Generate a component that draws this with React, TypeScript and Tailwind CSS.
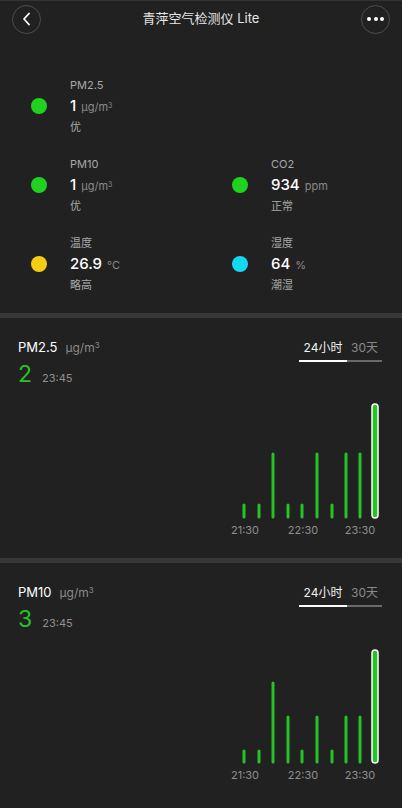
import React from "react";

const font = { fontFamily: 'Inter, "Noto Sans CJK SC", sans-serif' };

type Metric = { label: string; value: string; unit: React.ReactNode; status: string; dot: string };

const metrics: (Metric | null)[] = [
  { label: "PM2.5", value: "1", unit: <>μg/m<sup className="text-[7px]">3</sup></>, status: "优", dot: "bg-[#1fd21f]" },
  null,
  { label: "PM10", value: "1", unit: <>μg/m<sup className="text-[7px]">3</sup></>, status: "优", dot: "bg-[#1fd21f]" },
  { label: "CO2", value: "934", unit: "ppm", status: "正常", dot: "bg-[#1fd21f]" },
  { label: "温度", value: "26.9", unit: "°C", status: "略高", dot: "bg-[#f7cc14]" },
  { label: "湿度", value: "64", unit: "%", status: "潮湿", dot: "bg-[#14d8f2]" },
];

function MetricItem({ m }: { m: Metric }) {
  return (
    <div className="flex items-center h-[62px]">
      <div className={`w-4 h-4 rounded-full ${m.dot}`}></div>
      <div className="ml-[23px] flex flex-col">
        <div className="text-[11px] leading-[20px] text-[#a8a8a8]">{m.label}</div>
        <div className="flex items-baseline h-[22px] leading-[22px]">
          <span className="text-[15px] font-medium text-white">{m.value}</span>
          <span className="ml-[5px] text-[11px] text-[#8a8a8a]">{m.unit}</span>
        </div>
        <div className="text-[11px] leading-[20px] text-[#a8a8a8]">{m.status}</div>
      </div>
    </div>
  );
}

const xs = [244, 259, 273, 288, 302, 317, 332, 346, 360];

function Chart({ heights, last }: { heights: number[]; last: number }) {
  const base = 122;
  return (
    <svg width="402" height="150" className="block">
      {heights.map((h, i) => (
        <line
          key={i}
          x1={xs[i]}
          x2={xs[i]}
          y1={base}
          y2={base - h}
          stroke="#26c226"
          strokeWidth="3"
          strokeLinecap="round"
        />
      ))}
      <rect x={372} y={base - last} width={6} height={last + 1} rx={3} fill="#26c226" stroke="#ffffff" strokeWidth="1.5" />
      {[
        [245, "21:30"],
        [303, "22:30"],
        [360, "23:30"],
      ].map(([x, t]) => (
        <text key={t} x={x} y={139} textAnchor="middle" fontSize="11" fill="#8f8f8f" style={font}>
          {t}
        </text>
      ))}
    </svg>
  );
}

function ChartSection({ title, value, heights, last }: { title: string; value: string; heights: number[]; last: number }) {
  return (
    <div className="h-[240px] bg-[#212121] flex flex-col">
      <div className="flex justify-between pt-5">
        <div className="pl-[18px]">
          <div className="flex items-baseline h-[18px] leading-[18px]">
            <span className="text-[13px] text-white">{title}</span>
            <span className="ml-[8px] text-[12px] text-[#8a8a8a]">
              μg/m<sup className="text-[8px]">3</sup>
            </span>
          </div>
          <div className="flex items-baseline mt-[3px] h-[30px] leading-[30px]">
            <span className="text-[23px] text-[#27c127]">{value}</span>
            <span className="ml-[10px] text-[11px] text-[#8f8f8f]">23:45</span>
          </div>
        </div>
        <div className="flex pr-5 pt-[1px] h-fit">
          <div className="w-[48px] text-center text-[12px] leading-[18px] text-[#f0f0f0] pb-[3px] border-b-2 border-white">24小时</div>
          <div className="w-[35px] text-center text-[12px] leading-[18px] text-[#8a8a8a] pb-[3px] border-b-2 border-[#6a6a6a]">30天</div>
        </div>
      </div>
      <div className="mt-[6px]">
        <Chart heights={heights} last={last} />
      </div>
    </div>
  );
}

export default function App() {
  return (
    <div className="w-[402px] h-[808px] overflow-hidden bg-[#212121]" style={font}>
      <div className="h-[1px] bg-[#333333]"></div>
      <div className="h-[36px] flex items-center justify-between px-3">
        <div className="w-[29px] h-[29px] rounded-full border border-[#4d4d4d] flex items-center justify-center">
          <svg width="12" height="14" viewBox="0 0 12 14">
            <path d="M8 1.5 L3 7 L8 12.5" fill="none" stroke="#ffffff" strokeWidth="1.8" strokeLinecap="round" strokeLinejoin="round" />
          </svg>
        </div>
        <div className="text-[13px] text-[#e6e6e6]">青萍空气检测仪 Lite</div>
        <div className="w-[29px] h-[29px] rounded-full border border-[#4d4d4d] flex items-center justify-center gap-[2.5px]">
          <span className="w-[4px] h-[4px] rounded-full bg-white"></span>
          <span className="w-[4px] h-[4px] rounded-full bg-white"></span>
          <span className="w-[4px] h-[4px] rounded-full bg-white"></span>
        </div>
      </div>
      <div className="grid grid-cols-[201px_1fr] gap-y-[17px] pl-[31px] pt-[38px] pb-[18px]">
        {metrics.map((m, i) => (m ? <MetricItem key={i} m={m} /> : <div key={i}></div>))}
      </div>
      <div className="h-[5px] bg-[#383838]"></div>
      <ChartSection title="PM2.5" value="2" heights={[12, 12, 63, 12, 12, 63, 12, 63, 63]} last={113} />
      <div className="h-[5px] bg-[#383838]"></div>
      <ChartSection title="PM10" value="3" heights={[11, 11, 79, 45, 11, 45, 11, 45, 45]} last={112} />
    </div>
  );
}
